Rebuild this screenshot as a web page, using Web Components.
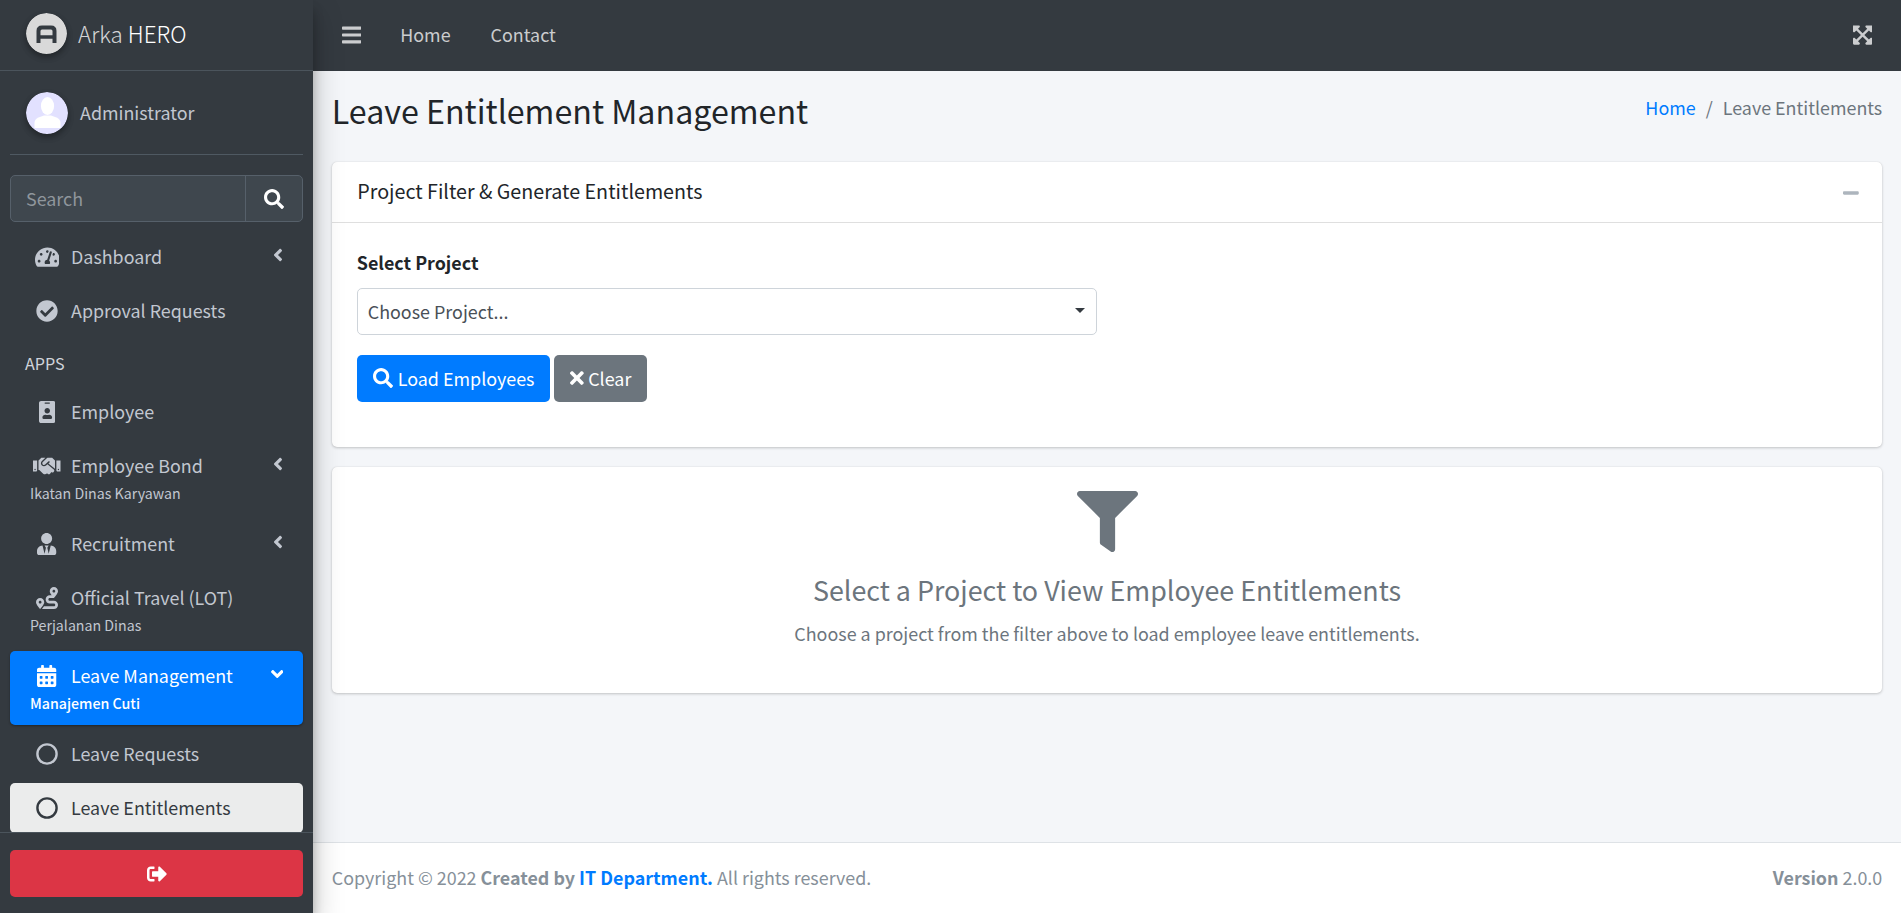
<!DOCTYPE html>
<html lang="en">
<head>
<meta charset="utf-8">
<title>Leave Entitlement Management</title>
<style>
    html, body { margin: 0; height: 100%; overflow: hidden; }
    body {
        font-family: "Noto Sans CJK SC", "Open Sans", sans-serif;
        font-size: 17.9px;
        line-height: 30px;
        color: #212529;
        background: #f4f6f9;
    }
</style>
</head>
<body>
<admin-layout>
    <side-bar slot="side">
        <nav-item icon="tachometer" label="Dashboard" arrow="left"></nav-item>
        <nav-item icon="check" label="Approval Requests"></nav-item>
        <nav-header>APPS</nav-header>
        <nav-item icon="badge" label="Employee"></nav-item>
        <nav-item icon="handshake" label="Employee Bond" sub="Ikatan Dinas Karyawan" arrow="left"></nav-item>
        <nav-item icon="tie" label="Recruitment" arrow="left"></nav-item>
        <nav-item icon="route" label="Official Travel (LOT)" sub="Perjalanan Dinas"></nav-item>
        <nav-item icon="calendar" label="Leave Management" sub="Manajemen Cuti" arrow="down" state="active"></nav-item>
        <nav-item icon="circle" label="Leave Requests" state="muted"></nav-item>
        <nav-item icon="circle" label="Leave Entitlements" state="current"></nav-item>
    </side-bar>
    <top-bar slot="top"></top-bar>
    <page-header heading="Leave Entitlement Management" current="Leave Entitlements"></page-header>
    <info-card heading="Project Filter &amp; Generate Entitlements">
        <project-filter></project-filter>
    </info-card>
    <info-card>
        <empty-state heading="Select a Project to View Employee Entitlements"
            text="Choose a project from the filter above to load employee leave entitlements."></empty-state>
    </info-card>
    <page-footer slot="bottom"></page-footer>
</admin-layout>

<script>
const iconPaths = {
    search: [512, 'M505 442.7L405.3 343c-4.5-4.5-10.6-7-17-7H372c27.6-35.3 44-79.7 44-128C416 93.1 322.9 0 208 0S0 93.1 0 208s93.1 208 208 208c48.3 0 92.7-16.4 128-44v16.3c0 6.4 2.5 12.5 7 17l99.7 99.7c9.4 9.4 24.6 9.4 33.9 0l28.3-28.3c9.4-9.4 9.4-24.6.1-34zM208 336c-70.7 0-128-57.2-128-128 0-70.7 57.2-128 128-128 70.7 0 128 57.2 128 128 0 70.7-57.2 128-128 128z'],
    bars: [448, 'M16 132h416c8.837 0 16-7.163 16-16V76c0-8.837-7.163-16-16-16H16C7.163 60 0 67.163 0 76v40c0 8.837 7.163 16 16 16zm0 160h416c8.837 0 16-7.163 16-16v-40c0-8.837-7.163-16-16-16H16c-8.837 0-16 7.163-16 16v40c0 8.837 7.163 16 16 16zm0 160h416c8.837 0 16-7.163 16-16v-40c0-8.837-7.163-16-16-16H16c-8.837 0-16 7.163-16 16v40c0 8.837 7.163 16 16 16z'],
    left: [256, 'M31.7 239l136-136c9.4-9.4 24.6-9.4 33.9 0l22.6 22.6c9.4 9.4 9.4 24.6 0 33.9L127.9 256l96.4 96.4c9.4 9.4 9.4 24.6 0 33.9L201.7 409c-9.4 9.4-24.6 9.4-33.9 0l-136-136c-9.5-9.4-9.5-24.6-.1-34z'],
    down: [320, 'M143 352.3L7 216.3c-9.4-9.4-9.4-24.6 0-33.9l22.6-22.6c9.4-9.4 24.6-9.4 33.9 0l96.4 96.4 96.4-96.4c9.4-9.4 24.6-9.4 33.9 0l22.6 22.6c9.4 9.4 9.4 24.6 0 33.9l-136 136c-9.2 9.4-24.4 9.4-33.8 0z'],
    check: [512, 'M504 256c0 136.967-111.033 248-248 248S8 392.967 8 256 119.033 8 256 8s248 111.033 248 248zM227.314 387.314l184-184c6.248-6.248 6.248-16.379 0-22.627l-22.627-22.627c-6.248-6.249-16.379-6.249-22.628 0L216 308.118l-70.059-70.059c-6.248-6.248-16.379-6.248-22.628 0l-22.627 22.627c-6.248 6.248-6.248 16.379 0 22.627l104 104c6.249 6.249 16.379 6.249 22.628.001z'],
    times: [352, 'M242.72 256l100.07-100.07c12.28-12.28 12.28-32.19 0-44.48l-22.24-22.24c-12.28-12.28-32.19-12.28-44.48 0L176 189.28 75.93 89.21c-12.28-12.28-32.19-12.28-44.48 0L9.21 111.45c-12.28 12.28-12.28 32.19 0 44.48L109.28 256 9.21 356.07c-12.28 12.28-12.28 32.19 0 44.48l22.24 22.24c12.28 12.28 32.2 12.28 44.48 0L176 322.72l100.07 100.07c12.28 12.28 32.2 12.28 44.48 0l22.24-22.24c12.28-12.28 12.28-32.19 0-44.48L242.72 256z'],
    calendar: [448, 'M0 464c0 26.5 21.5 48 48 48h352c26.5 0 48-21.5 48-48V192H0v272zm320-196c0-6.6 5.4-12 12-12h40c6.6 0 12 5.4 12 12v40c0 6.6-5.4 12-12 12h-40c-6.6 0-12-5.4-12-12v-40zm0 128c0-6.6 5.4-12 12-12h40c6.6 0 12 5.4 12 12v40c0 6.6-5.4 12-12 12h-40c-6.6 0-12-5.4-12-12v-40zM192 268c0-6.6 5.4-12 12-12h40c6.6 0 12 5.4 12 12v40c0 6.6-5.4 12-12 12h-40c-6.6 0-12-5.4-12-12v-40zm0 128c0-6.6 5.4-12 12-12h40c6.6 0 12 5.4 12 12v40c0 6.6-5.4 12-12 12h-40c-6.6 0-12-5.4-12-12v-40zM64 268c0-6.6 5.4-12 12-12h40c6.6 0 12 5.4 12 12v40c0 6.6-5.4 12-12 12H76c-6.6 0-12-5.4-12-12v-40zm0 128c0-6.6 5.4-12 12-12h40c6.6 0 12 5.4 12 12v40c0 6.6-5.4 12-12 12H76c-6.6 0-12-5.4-12-12v-40zM400 64h-48V16c0-8.8-7.2-16-16-16h-32c-8.8 0-16 7.2-16 16v48H160V16c0-8.8-7.2-16-16-16h-32c-8.8 0-16 7.2-16 16v48H48C21.5 64 0 85.5 0 112v48h448v-48c0-26.5-21.5-48-48-48z'],
    logout: [512, 'M497 273L329 441c-15 15-41 4.5-41-17v-96H152c-13.3 0-24-10.7-24-24v-96c0-13.3 10.7-24 24-24h136V88c0-21.4 25.9-32 41-17l168 168c9.3 9.4 9.3 24.6 0 34zM192 436v-40c0-6.6-5.4-12-12-12H96c-17.7 0-32-14.3-32-32V160c0-17.7 14.3-32 32-32h84c6.6 0 12-5.4 12-12V76c0-6.6-5.4-12-12-12H96c-53 0-96 43-96 96v192c0 53 43 96 96 96h84c6.6 0 12-5.4 12-12z'],
    expand: [448, 'M448 344v112a23.94 23.94 0 0 1-24 24H312c-21.39 0-32.09-25.9-17-41l36.2-36.2L224 295.6 116.77 402.9 153 439c15.09 15.1 4.39 41-17 41H24a23.94 23.94 0 0 1-24-24V344c0-21.4 25.89-32.1 41-17l36.19 36.2L184.46 256 77.18 148.7 41 185c-15.1 15.1-41 4.4-41-17V56a23.94 23.94 0 0 1 24-24h112c21.39 0 32.09 25.9 17 41l-36.2 36.2L224 216.4l107.23-107.3L295 73c-15.09-15.1-4.39-41 17-41h112a23.94 23.94 0 0 1 24 24v112c0 21.4-25.89 32.1-41 17l-36.19-36.2L263.54 256l107.28 107.3L407 327.1c15.1-15.2 41-4.5 41 16.9z'],
    tachometer: [576, 'M288 32C128.94 32 0 160.94 0 320c0 52.8 14.25 102.26 39.06 144.8 5.61 9.62 16.3 15.2 27.44 15.2h443c11.14 0 21.83-5.58 27.44-15.2C561.75 422.26 576 372.8 576 320c0-159.06-128.94-288-288-288zm0 64c14.71 0 26.58 10.13 30.32 23.65-1.11 2.26-2.64 4.23-3.45 6.67l-9.22 27.67c-5.13 3.49-10.97 6.01-17.64 6.01-17.67 0-32-14.33-32-32S270.33 96 288 96zM96 384c-17.67 0-32-14.33-32-32s14.33-32 32-32 32 14.33 32 32-14.33 32-32 32zm48-160c-17.67 0-32-14.33-32-32s14.33-32 32-32 32 14.33 32 32-14.33 32-32 32zm246.77-72.41l-61.33 184C343.13 347.33 352 364.54 352 384c0 11.72-3.38 22.55-8.88 32H232.88c-5.5-9.45-8.88-20.28-8.88-32 0-33.94 26.5-61.43 59.9-63.59l61.34-184.01c4.17-12.56 17.73-19.45 30.36-15.17 12.57 4.19 19.35 17.79 15.17 30.36zm14.66 57.2l15.52-46.55c3.47-1.29 7.13-2.23 11.05-2.23 17.67 0 32 14.33 32 32s-14.33 32-32 32c-11.38-.01-20.89-6.28-26.57-15.22zM480 384c-17.67 0-32-14.33-32-32s14.33-32 32-32 32 14.33 32 32-14.33 32-32 32z'],
    badge: [384, 'M336 0H48C21.5 0 0 21.5 0 48v416c0 26.5 21.5 48 48 48h288c26.5 0 48-21.5 48-48V48c0-26.5-21.5-48-48-48zM144 32h96c8.8 0 16 7.2 16 16s-7.2 16-16 16h-96c-8.8 0-16-7.2-16-16s7.2-16 16-16zm48 128c35.3 0 64 28.7 64 64s-28.7 64-64 64-64-28.7-64-64 28.7-64 64-64zm112 236.8c0 10.6-10 19.2-22.4 19.2H102.4C90 416 80 407.4 80 396.8v-19.2c0-31.8 30.1-57.6 67.2-57.6h5c12.3 5.1 25.7 8 39.8 8s27.6-2.9 39.8-8h5c37.1 0 67.2 25.8 67.2 57.6v19.2z'],
    tie: [448, 'M224 256c70.7 0 128-57.3 128-128S294.7 0 224 0 96 57.3 96 128s57.3 128 128 128zm95.8 32.6L272 480l-32-136 32-56h-96l32 56-32 136-47.8-191.4C56.9 292 0 350.3 0 422.4V464c0 26.5 21.5 48 48 48h352c26.5 0 48-21.5 48-48v-41.6c0-72.1-56.9-130.4-128.2-133.8z'],
    route: [512, 'M416 320h-96c-17.6 0-32-14.4-32-32s14.4-32 32-32h96s96-107 96-160-43-96-96-96-96 43-96 96c0 25.5 22.2 63.4 45.3 96H320c-52.9 0-96 43.1-96 96s43.1 96 96 96h96c17.6 0 32 14.4 32 32s-14.4 32-32 32H185.5c-16 24.8-33.8 47.7-47.3 64H416c52.9 0 96-43.1 96-96s-43.1-96-96-96zm0-256c17.7 0 32 14.3 32 32s-14.3 32-32 32-32-14.3-32-32 14.3-32 32-32zM96 256c-53 0-96 43-96 96s96 160 96 160 96-107 96-160-43-96-96-96zm0 128c-17.7 0-32-14.3-32-32s14.3-32 32-32 32 14.3 32 32-14.3 32-32 32z'],
    handshake: [640, 'M434.7 64h-85.9c-8 0-15.7 3-21.6 8.4l-98.3 90c-.1.1-.2.3-.3.4-16.6 15.6-16.3 40.5-2.1 56 12.7 13.9 39.4 17.6 56.1 2.7.1-.1.3-.1.4-.2l79.9-73.2c6.5-5.9 16.7-5.5 22.6 1 6 6.5 5.5 16.6-1 22.6l-26.1 23.9L504 313.8c2.9 2.4 5.5 5 7.9 7.7V128l-54.6-54.6c-5.9-6-14.1-9.4-22.6-9.4zM544 128.2v223.9c0 17.7 14.3 32 32 32h64V128.2h-96zm48 223.9c-8.8 0-16-7.2-16-16s7.2-16 16-16 16 7.2 16 16-7.2 16-16 16zM0 384h64c17.7 0 32-14.3 32-32V128.2H0V384zm48-63.9c8.8 0 16 7.2 16 16s-7.2 16-16 16-16-7.2-16-16c0-8.9 7.2-16 16-16zm435.9 18.6L334.6 217.5l-30 27.5c-29.7 27.1-75.2 24.5-101.7-4.4-26.9-29.4-24.8-74.9 4.4-101.7L289.1 64h-83.8c-8.5 0-16.6 3.4-22.6 9.4L128 128v223.9h18.3l90.5 81.9c27.4 22.3 67.7 18.1 90-9.3l.2-.2 17.9 15.5c15.9 13 39.4 10.5 52.3-5.4l31.4-38.6 5.4 4.4c13.7 11.1 33.9 9.1 45-4.7l9.5-11.7c11.2-13.8 9.1-33.9-4.6-45.1z'],
    minus: [448, 'M416 208H32c-17.67 0-32 14.33-32 32v32c0 17.67 14.33 32 32 32h384c17.67 0 32-14.33 32-32v-32c0-17.67-14.33-32-32-32z'],
    filter: [512, 'M487.976 0H24.028C2.71 0-8.047 25.866 7.058 40.971L192 225.941V432c0 7.831 3.821 15.17 10.237 19.662l80 55.98C298.02 518.69 320 507.493 320 487.98V225.941l184.947-184.97C520.021 25.896 509.338 0 487.976 0z']
};

function icon(name, size) {
    if (name === 'circle') {
        return `<svg width="${size}" height="${size}" viewBox="0 0 22 22" style="display:block"><circle cx="11" cy="11" r="9.6" fill="none" stroke="currentColor" stroke-width="2.4"/></svg>`;
    }
    const [w, d] = iconPaths[name];
    return `<svg width="${size * w / 512}" height="${size}" viewBox="0 0 ${w} 512" style="display:block" fill="currentColor"><path d="${d}"/></svg>`;
}

class AdminLayout extends HTMLElement {
    constructor() {
        super();
        const shadow = this.attachShadow({ mode: 'open' });
        shadow.innerHTML = `
            <style>
                :host { display: flex; height: 913px; overflow: hidden; }
                .side { flex: 0 0 313px; position: relative; z-index: 2; display: flex; }
                .main { flex: 1; min-width: 0; display: flex; flex-direction: column; }
                .content { flex: 1; padding: 0 18.75px; }
            </style>
            <div class="side"><slot name="side"></slot></div>
            <div class="main">
                <slot name="top"></slot>
                <div class="content"><slot></slot></div>
                <slot name="bottom"></slot>
            </div>
        `;
    }
}

class SideBar extends HTMLElement {
    constructor() {
        super();
        const shadow = this.attachShadow({ mode: 'open' });
        shadow.innerHTML = `
            <style>
                :host {
                    display: flex;
                    flex-direction: column;
                    width: 100%;
                    background: #343a40;
                    color: #c2c7d0;
                    box-shadow: 0 14px 28px rgba(0,0,0,.25), 0 10px 10px rgba(0,0,0,.22);
                }
                .brand {
                    flex: none;
                    height: 71px;
                    box-sizing: border-box;
                    display: flex;
                    align-items: center;
                    gap: 11px;
                    padding: 0 0 3px 26px;
                    border-bottom: 1px solid #4b545c;
                    font-size: 22.4px;
                    font-weight: 300;
                    color: rgba(255,255,255,.8);
                }
                .brand span { padding-bottom: 2px; }
                .logo, .avatar {
                    border-radius: 50%;
                    box-shadow: 0 3px 6px rgba(0,0,0,.16), 0 3px 6px rgba(0,0,0,.23);
                    display: block;
                }
                .brand b { font-weight: 300; color: #fff; }
                .user {
                    flex: none;
                    margin: 0 10px;
                    height: 84px;
                    box-sizing: border-box;
                    padding-left: 16px;
                    display: flex;
                    align-items: center;
                    gap: 12px;
                    border-bottom: 1px solid #4f5962;
                }
                .user span { padding-bottom: 2px; }
                .search {
                    flex: none;
                    margin: 20px 10px 9.5px;
                    height: 47px;
                    box-sizing: border-box;
                    display: flex;
                    background: #3f474e;
                    border: 1px solid #56606a;
                    border-radius: 5px;
                }
                .search span { flex: 1; padding: 7px 15px; color: #8f969c; }
                .search div {
                    flex: 0 0 56px;
                    border-left: 1px solid #56606a;
                    display: flex;
                    align-items: center;
                    justify-content: center;
                    color: #fff;
                }
                .nav { flex: 1; min-height: 0; overflow: hidden; }
                .bottom {
                    flex: none;
                    height: 81px;
                    box-sizing: border-box;
                    border-top: 1px solid #4b545c;
                    padding: 17px 10px 16px;
                }
                .logout {
                    height: 47px;
                    display: flex;
                    align-items: center;
                    justify-content: center;
                    background: #dc3545;
                    color: #fff;
                    border-radius: 5px;
                }
            </style>
            <div class="brand">
                <svg class="logo" width="41" height="41" viewBox="0 0 41 41">
                    <circle cx="20.5" cy="20.5" r="20.5" fill="#d9d9d9"/>
                    <path d="M12.500 30V18q0-3.500 3.500-3.500h9q3.500 0 3.500 3.500v12" fill="none" stroke="#343a40" stroke-width="4"/>
                    <path d="M12.500 24h16" stroke="#343a40" stroke-width="3.500"/>
                </svg>
                <span>Arka <b>HERO</b></span>
            </div>
            <div class="user">
                <svg class="avatar" width="42" height="42" viewBox="0 0 42 42">
                    <clipPath id="av"><circle cx="21" cy="21" r="21"/></clipPath>
                    <circle cx="21" cy="21" r="21" fill="#e2e1ff"/>
                    <g clip-path="url(#av)" fill="#fff">
                        <ellipse cx="21.5" cy="14" rx="6.6" ry="9"/>
                        <path d="M8.5 36v-5q0-4 4-5.5l5.5-2h7l5.5 2q4 1.500 4 5.500v5z"/>
                    </g>
                </svg>
                <span>Administrator</span>
            </div>
            <div class="search">
                <span>Search</span>
                <div>${icon('search', 20)}</div>
            </div>
            <div class="nav"><slot></slot></div>
            <div class="bottom">
                <div class="logout">${icon('logout', 20)}</div>
            </div>
        `;
    }
}

class NavHeader extends HTMLElement {
    constructor() {
        super();
        const shadow = this.attachShadow({ mode: 'open' });
        shadow.innerHTML = `
            <style>
                :host {
                    display: block;
                    padding: 10px 25px;
                    font-size: 16.1px;
                    line-height: 27px;
                    color: #d0d4db;
                }
            </style>
            <slot></slot>
        `;
    }
}

class NavItem extends HTMLElement {
    constructor() {
        super();
        const shadow = this.attachShadow({ mode: 'open' });
        const sub = this.getAttribute('sub');
        const arrow = this.getAttribute('arrow');
        shadow.innerHTML = `
            <style>
                :host {
                    display: block;
                    margin: 0 10px 4px;
                    padding: 10px 20px;
                    border-radius: 5px;
                    color: #c2c7d0;
                }
                :host([state="active"]) {
                    background: #007bff;
                    color: #fff;
                    box-shadow: 0 1px 3px rgba(0,0,0,.12), 0 1px 2px rgba(0,0,0,.24);
                }
                :host([state="active"]) .sub { font-weight: 500; }
                :host([state="current"]) {
                    background: #ebecec;
                    color: #343a40;
                }
                .row { display: flex; align-items: center; height: 30px; }
                .icon {
                    flex: 0 0 32px;
                    margin: 0 8px 0 1px;
                    display: flex;
                    justify-content: center;
                }
                .label { flex: 1; white-space: nowrap; padding-bottom: 2px; }
                .arrow { flex: none; margin-top: -3px; }
                .sub { font-size: 14.2px; line-height: 24px; white-space: nowrap; }
            </style>
            <div class="row">
                <span class="icon">${icon(this.getAttribute('icon'), 22)}</span>
                <span class="label">${this.getAttribute('label')}</span>
                ${arrow ? `<span class="arrow">${icon(arrow, 20)}</span>` : ''}
            </div>
            ${sub ? `<div class="sub">${sub}</div>` : ''}
        `;
    }
}

class TopBar extends HTMLElement {
    constructor() {
        super();
        const shadow = this.attachShadow({ mode: 'open' });
        shadow.innerHTML = `
            <style>
                :host {
                    display: flex;
                    flex: none;
                    height: 70.5px;
                    align-items: center;
                    padding: 0 29px 0 9px;
                    background: #343a40;
                    color: rgba(255,255,255,.75);
                }
                a { padding: 0 20px 2px; color: inherit; }
                .toggle { padding: 0 19px 0 20px; }
                .end { margin-left: auto; }
            </style>
            <a class="toggle">${icon('bars', 22)}</a>
            <a>Home</a>
            <a>Contact</a>
            <span class="end">${icon('expand', 22)}</span>
        `;
    }
}

class PageHeader extends HTMLElement {
    constructor() {
        super();
        const shadow = this.attachShadow({ mode: 'open' });
        shadow.innerHTML = `
            <style>
                :host {
                    display: flex;
                    justify-content: space-between;
                    align-items: flex-start;
                    padding: 18.5px 0 28px;
                }
                h1 { margin: 0 0 2px; font-size: 32.2px; line-height: 43px; font-weight: 400; }
                ol { margin: 3px 0 0; padding: 0; list-style: none; display: flex; color: #6c757d; }
                a { color: #007bff; }
                .sep { padding: 0 10px; }
            </style>
            <h1>${this.getAttribute('heading')}</h1>
            <ol>
                <li><a>Home</a></li>
                <li class="sep">/</li>
                <li>${this.getAttribute('current')}</li>
            </ol>
        `;
    }
}

class InfoCard extends HTMLElement {
    constructor() {
        super();
        const shadow = this.attachShadow({ mode: 'open' });
        const heading = this.getAttribute('heading');
        shadow.innerHTML = `
            <style>
                :host {
                    display: block;
                    margin-bottom: 20px;
                    background: #fff;
                    border-radius: 5px;
                    box-shadow: 0 0 1px rgba(0,0,0,.125), 0 1px 3px rgba(0,0,0,.2);
                }
                .head {
                    height: 61px;
                    box-sizing: border-box;
                    display: flex;
                    align-items: center;
                    justify-content: space-between;
                    padding: 0 23.5px 3px 25.5px;
                    border-bottom: 1px solid rgba(0,0,0,.125);
                    font-size: 19.7px;
                }
                .head span { color: #adb5bd; margin-top: 4px; }
            </style>
            ${heading ? `<div class="head">${heading.replace('&', '&amp;')}<span>${icon('minus', 18)}</span></div>` : ''}
            <slot></slot>
        `;
    }
}

class ProjectFilter extends HTMLElement {
    constructor() {
        super();
        const shadow = this.attachShadow({ mode: 'open' });
        shadow.innerHTML = `
            <style>
                :host { display: block; padding: 24px 25px 44.5px; }
                label { display: block; margin-bottom: 11px; font-weight: 700; }
                .select {
                    width: 740px;
                    height: 47px;
                    box-sizing: border-box;
                    display: flex;
                    align-items: center;
                    justify-content: space-between;
                    padding: 0 11px 2px 10px;
                    margin-bottom: 20px;
                    border: 1px solid #ced4da;
                    border-radius: 5px;
                    color: #495057;
                }
                .select i {
                    border: 5px solid transparent;
                    border-top-color: #343a40;
                    border-bottom: 0;
                }
                .buttons { display: flex; gap: 4px; }
                button {
                    display: flex;
                    align-items: center;
                    height: 47px;
                    padding: 0 16px 1px;
                    border: 0;
                    border-radius: 5px;
                    font: inherit;
                    color: #fff;
                }
                .load { background: #007bff; gap: 5px; }
                .clear { background: #6c757d; gap: 4px; }
            </style>
            <label>Select Project</label>
            <div class="select">Choose Project...<i></i></div>
            <div class="buttons">
                <button class="load">${icon('search', 20)}Load Employees</button>
                <button class="clear">${icon('times', 20)}Clear</button>
            </div>
        `;
    }
}

class EmptyState extends HTMLElement {
    constructor() {
        super();
        const shadow = this.attachShadow({ mode: 'open' });
        shadow.innerHTML = `
            <style>
                :host {
                    display: flex;
                    flex-direction: column;
                    align-items: center;
                    padding: 24px 25px 45px;
                    color: #6c757d;
                }
                h4 { margin: 20px 0 10px; font-size: 26.85px; line-height: 36px; font-weight: 400; }
                p { margin: 0; }
            </style>
            ${icon('filter', 61)}
            <h4>${this.getAttribute('heading')}</h4>
            <p>${this.getAttribute('text')}</p>
        `;
    }
}

class PageFooter extends HTMLElement {
    constructor() {
        super();
        const shadow = this.attachShadow({ mode: 'open' });
        shadow.innerHTML = `
            <style>
                :host {
                    display: flex;
                    flex: none;
                    height: 71px;
                    box-sizing: border-box;
                    align-items: center;
                    justify-content: space-between;
                    padding: 0 18.75px 2px;
                    background: #fff;
                    border-top: 1px solid #dee2e6;
                    color: #869099;
                }
                a { color: #007bff; }
            </style>
            <span>Copyright © 2022 <b>Created by <a>IT Department.</a></b> All rights reserved.</span>
            <span><b>Version</b> 2.0.0</span>
        `;
    }
}

customElements.define('admin-layout', AdminLayout);
customElements.define('side-bar', SideBar);
customElements.define('nav-header', NavHeader);
customElements.define('nav-item', NavItem);
customElements.define('top-bar', TopBar);
customElements.define('page-header', PageHeader);
customElements.define('info-card', InfoCard);
customElements.define('project-filter', ProjectFilter);
customElements.define('empty-state', EmptyState);
customElements.define('page-footer', PageFooter);
</script>
</body>
</html>
